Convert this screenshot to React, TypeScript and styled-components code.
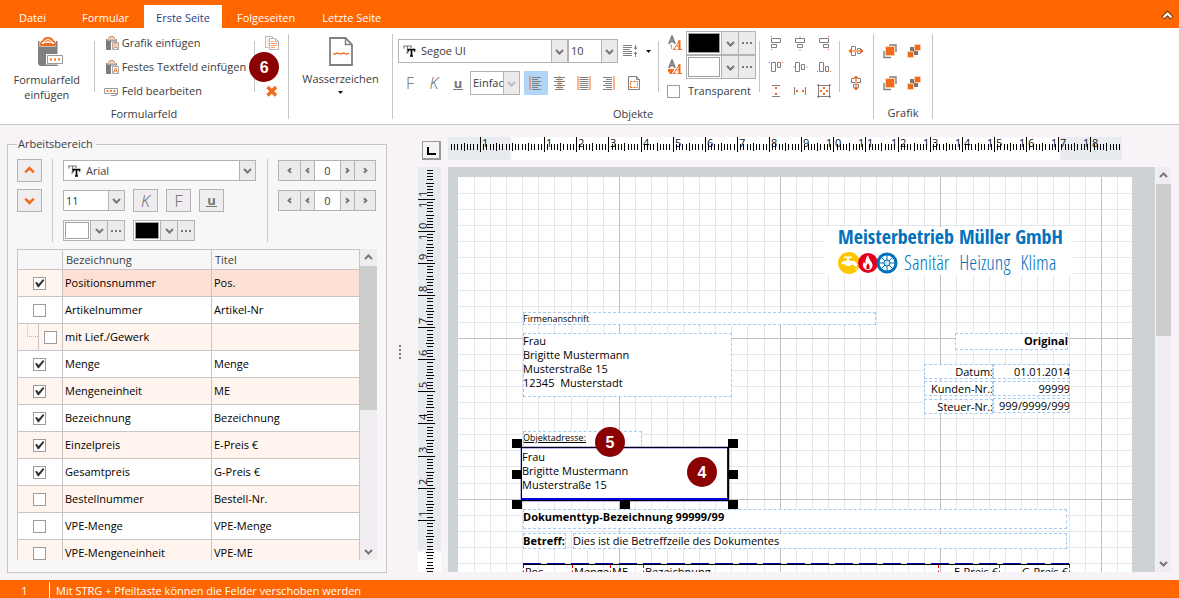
import React from 'react';
import styled, { createGlobalStyle, css } from 'styled-components';

const GRAY = '#808080';
const ORANGE = '#f26a1b';
const PALE = '#fbcfae';
const BRAND = '#ff6600';
const LINE = '#c6c6c6';
const EDGE = '#b4b2b4';

const Global = createGlobalStyle`
  *, *::before, *::after { box-sizing: border-box; }
  body {
    margin: 0;
    font-family: "Open Sans", "Noto Sans", sans-serif;
    font-size: 11px;
    line-height: 16px;
    color: #3c3c3c;
    background: #f7f3f7;
  }
  button, input, select { font: inherit; color: inherit; margin: 0; padding: 0; }
  button { border: 0; background: none; }
  svg { flex: none; }
`;

const Shell = styled.div`
  display: flex;
  flex-direction: column;
  height: 100vh;
  min-height: 400px;
  overflow: hidden;
`;

/* ---------- tab bar ---------- */

const TabBar = styled.nav`
  display: flex;
  align-items: flex-end;
  gap: 3px;
  height: 28px;
  flex: none;
  padding-left: 7px;
  background: ${BRAND};
`;

const Tab = styled.button<{ $active?: boolean; $file?: boolean }>`
  height: 23px;
  padding: 2px 12px 0;
  white-space: nowrap;
  color: ${p => (p.$active ? '#1f3d8a' : '#fff')};
  background: ${p => (p.$active ? '#fff' : 'transparent')};
  ${p => p.$file && css`margin-right: 9px;`}
`;

const Collapse = styled.button`
  display: flex;
  margin: 0 4px 5px auto;
`;

/* ---------- ribbon ---------- */

const Ribbon = styled.div`
  display: flex;
  flex: none;
  height: 97px;
  background: #fff;
  border-bottom: 1px solid ${LINE};
`;

const GroupBox = styled.section<{ $width: number }>`
  display: flex;
  flex-direction: column;
  flex: none;
  width: ${p => p.$width}px;
  padding-top: 3px;
`;

const GroupBody = styled.div`
  display: flex;
  height: 72px;
`;

const GroupName = styled.div`
  line-height: 22px;
  text-align: center;
`;

const Rule = styled.div<{ $top: number; $height: number }>`
  flex: none;
  width: 1px;
  height: ${p => p.$height}px;
  margin-top: ${p => p.$top}px;
  background: ${LINE};
`;

const BigButton = styled.button<{ $width: number }>`
  display: flex;
  flex-direction: column;
  align-items: center;
  width: ${p => p.$width}px;
  padding-top: 6px;
  gap: 5px;
  line-height: 15px;
`;

const CommandList = styled.div`
  display: flex;
  flex-direction: column;
  width: 160px;
  padding-left: 9px;
`;

const Command = styled.button`
  display: flex;
  align-items: center;
  gap: 2px;
  height: 24px;
  white-space: nowrap;
`;

const IconColumn = styled.div`
  position: relative;
  display: grid;
  grid-auto-rows: 24px;
  width: 33px;
`;

const IconGrid = styled.div<{ $cols: number; $row: number; $top?: number }>`
  display: grid;
  grid-template-columns: repeat(${p => p.$cols}, 24px);
  grid-auto-rows: ${p => p.$row}px;
  padding: ${p => p.$top || 0}px 3px 0 4px;
`;

const IconButton = styled.button<{ $active?: boolean }>`
  display: flex;
  align-items: center;
  justify-content: center;
  min-width: 24px;
  height: 24px;
  align-self: center;
  background: ${p => (p.$active ? '#b2d6f7' : 'transparent')};
`;

const TextPanel = styled.div`
  display: flex;
  flex-direction: column;
  gap: 8px;
  width: 265px;
  padding: 8px 0 0 5px;
`;

const Row = styled.div`
  display: flex;
  align-items: center;
`;

const Spacer = styled.div<{ $w: number }>`
  flex: none;
  width: ${p => p.$w}px;
`;

const StyleMark = styled.span<{ $kind: 'F' | 'K' | 'U' }>`
  font-size: 16px;
  font-weight: 300;
  line-height: 20px;
  color: #666;
  ${p => p.$kind === 'K' && css`font-style: italic;`}
  ${p => p.$kind === 'U' && css`
    font-size: 13px;
    line-height: 12px;
    font-weight: 700;
    color: #777;
    border-bottom: 1px solid #777;
    padding: 0 1px;
  `}
`;

const ColorPanel = styled.div`
  display: flex;
  flex-direction: column;
  width: 100px;
  padding-left: 8px;
`;

const ColorRow = styled.div`
  display: flex;
  align-items: center;
  gap: 3px;
  height: 24px;
`;

const CheckLabel = styled.label`
  display: flex;
  align-items: center;
  gap: 8px;
  height: 24px;
`;

/* ---------- controls ---------- */

const ComboBox = styled.div<{ $width: number; $h: number; $arrow: number }>`
  display: grid;
  grid-template-columns: 1fr ${p => p.$arrow}px;
  grid-template-rows: 1fr;
  flex: none;
  width: ${p => p.$width}px;
  height: ${p => p.$h}px;
  border: 1px solid ${EDGE};
  background: #fff;
`;

const ComboSelect = styled.select<{ $indent: number }>`
  grid-area: 1 / 1 / 2 / 3;
  min-width: 0;
  appearance: none;
  border: 0;
  background: transparent;
  padding-left: ${p => p.$indent}px;
  outline: none;
`;

const ComboIcon = styled.span`
  grid-area: 1 / 1;
  align-self: center;
  display: flex;
  padding-left: 4px;
  pointer-events: none;
`;

const ComboArrow = styled.span`
  grid-area: 1 / 2;
  display: flex;
  align-items: center;
  justify-content: center;
  background: #edeaed;
  border-left: 1px solid ${EDGE};
  pointer-events: none;
`;

const Picker = styled.div<{ $width: number; $h: number }>`
  display: grid;
  grid-template-columns: 1fr 17px 17px;
  flex: none;
  width: ${p => p.$width}px;
  height: ${p => p.$h}px;
  border: 1px solid ${EDGE};
  background: #fff;
`;

const Swatch = styled.button<{ $color: string }>`
  margin: 1px;
  border: 1px solid #a0a0a0;
  background: ${p => p.$color};
`;

const PickerPart = styled.button`
  display: flex;
  align-items: center;
  justify-content: center;
  background: #edeaed;
  border-left: 1px solid ${EDGE};
`;

const Check = styled.input.attrs({ type: 'checkbox' })`
  appearance: none;
  display: block;
  flex: none;
  width: 13px;
  height: 13px;
  border: 1px solid #9c9c9c;
  background: #fff;
  &:checked::before {
    content: '';
    display: block;
    width: 11px;
    height: 11px;
    background: #333;
    clip-path: polygon(10% 46%, 26% 40%, 42% 60%, 82% 14%, 94% 24%, 44% 88%, 34% 88%);
  }
`;

/* ---------- work area ---------- */

const Main = styled.main`
  display: flex;
  flex: 1;
  min-height: 0;
  padding: 10px 8px 7px 7px;
`;

const Panel = styled.fieldset`
  display: flex;
  flex-direction: column;
  flex: none;
  gap: 7px;
  width: 380px;
  min-width: 0;
  margin: 0;
  padding: 6px 9px 12px;
  border: 1px solid ${LINE};
  background: #f7f7f7;
`;

const Legend = styled.legend`
  padding: 0 3px 0 1px;
  line-height: 18px;
`;

const PanelTools = styled.div`
  display: flex;
  flex: none;
  height: 83px;
`;

const Stack = styled.div`
  display: flex;
  flex-direction: column;
  gap: 7px;
`;

const ToolRow = styled.div`
  display: flex;
  align-items: center;
  gap: 8px;
  height: 23px;
`;

const Square = styled.button`
  display: flex;
  align-items: center;
  justify-content: center;
  flex: none;
  width: 25px;
  height: 23px;
  border: 1px solid ${EDGE};
  background: #f0edf0;
`;

const Spin = styled.div`
  display: grid;
  grid-template-columns: 22px 14px 25px 14px 21px;
  height: 21px;
  border: 1px solid ${EDGE};
  background: #fff;
`;

const SpinPart = styled.button<{ $side: 'left' | 'right' }>`
  display: flex;
  align-items: center;
  justify-content: center;
  background: #edeaed;
  ${p => css`border-${p.$side === 'left' ? 'right' : 'left'}: 1px solid ${EDGE};`}
`;

const SpinValue = styled.input`
  min-width: 0;
  border: 0;
  text-align: center;
  background: #fff;
  outline: none;
`;

const TableArea = styled.div`
  display: flex;
  flex: 1;
  min-height: 0;
  overflow: hidden;
`;

const Table = styled.table`
  table-layout: fixed;
  align-self: flex-start;
  width: 343px;
  border-collapse: separate;
  border-spacing: 0;
  border: 1px solid ${LINE};
  border-width: 1px 0 0 1px;
  color: #000;
`;

const Th = styled.th<{ $width: number }>`
  width: ${p => p.$width}px;
  height: 20px;
  padding: 0 3px;
  font-weight: 400;
  text-align: left;
  color: #3c3c3c;
  border: 1px solid ${LINE};
  border-width: 0 1px 1px 0;
`;

const Tr = styled.tr<{ $tinted: boolean; $selected: boolean }>`
  background: ${p => (p.$tinted ? '#fff5ee' : '#fff')};
  td + td { background: ${p => (p.$selected ? '#fee1d5' : 'transparent')}; }
`;

const Td = styled.td`
  height: 27px;
  padding: 0 2px;
  border: 1px solid ${LINE};
  border-width: 0 1px 1px 0;
`;

const CheckCell = styled.div<{ $child: boolean }>`
  display: flex;
  align-items: center;
  height: 26px;
  margin-left: -2px;
  padding-left: ${p => (p.$child ? 0 : 15)}px;
`;

const Branch = styled.span`
  display: flex;
  flex: none;
  width: 21px;
  height: 26px;
  margin-right: 5px;
  padding: 0 0 13px 9px;
  border-right: 1px solid ${LINE};
  &::before {
    content: '';
    flex: 1;
    border: 1px dotted #bbb;
    border-width: 0 0 1px 1px;
  }
`;

const Scroll = styled.div<{ $w: number }>`
  display: flex;
  flex-direction: column;
  flex: none;
  width: ${p => p.$w}px;
  background: #f1ecf1;
`;

const ScrollButton = styled.button`
  display: flex;
  align-items: center;
  justify-content: center;
  height: 17px;
`;

const ScrollTrack = styled.div`
  flex: 1;
`;

const Thumb = styled.div<{ $share: number }>`
  height: ${p => p.$share}%;
  background: #cdcdcd;
`;

const Splitter = styled.div`
  display: flex;
  flex-direction: column;
  justify-content: center;
  align-items: center;
  gap: 2px;
  width: 26px;
  margin-right: 5px;
  padding-bottom: 4px;
  i { width: 2px; height: 2px; background: #777; }
`;

/* ---------- designer ---------- */

const Designer = styled.div`
  display: grid;
  flex: 1;
  min-width: 0;
  grid-template-columns: 23px minmax(0, 1fr) 15px;
  grid-template-rows: 23px minmax(0, 1fr);
  gap: 7px 7px;
  padding: 2px 0 1px;
`;

const Corner = styled.button`
  justify-self: end;
  align-self: end;
  display: flex;
  width: 19px;
  height: 19px;
  padding: 5px 4px;
  border: 1px solid #999;
  box-shadow: inset -1px -1px 0 #999;
  background: #f4f4f4;
  &::before {
    content: '';
    width: 9px;
    height: 8px;
    border: 2px solid #000;
    border-width: 0 0 2px 2px;
  }
`;

/* the negative margin leaves room for the digits' line boxes inside the clip */
const RulerBox = styled.div`
  min-width: 0;
  min-height: 0;
  overflow: hidden;
  margin: -5px 0 0 -5px;
  padding: 5px 0 0 5px;
  svg { display: block; overflow: visible; }
`;

const Viewport = styled.div`
  overflow: hidden;
  margin-right: -6px;
  padding: 10px 0 0 10px;
  background: #cdd3d5;
`;

const Page = styled.div`
  position: relative;
  width: 674px;
  height: 953px;
  background: #fff;
  color: #000;
  & > svg { display: block; }
`;

type FieldProps = { $x: number; $y: number; $w: number; $h: number };

const Field = styled.div<FieldProps & { $bold?: boolean; $right?: boolean; $small?: boolean }>`
  position: absolute;
  left: ${p => p.$x}px;
  top: ${p => p.$y}px;
  width: ${p => p.$w}px;
  height: ${p => p.$h}px;
  padding-top: 1px;
  outline: 1px dashed #a6cbf3;
  outline-offset: -1px;
  background: #fff;
  white-space: pre;
  line-height: ${p => (p.$small ? 12 : 14)}px;
  font-size: ${p => (p.$small ? 9 : 11)}px;
  font-weight: ${p => (p.$bold ? 700 : 400)};
  text-align: ${p => (p.$right ? 'right' : 'left')};
`;

const Selected = styled.div<FieldProps>`
  position: absolute;
  left: ${p => p.$x}px;
  top: ${p => p.$y}px;
  width: ${p => p.$w}px;
  height: ${p => p.$h}px;
  border: 1px solid #000;
  outline: 1px solid #b9b9ee;
  box-shadow: inset -1px -2px 0 #0000e0, inset 0 1px 0 #b9b9ee;
  background: #fff;
  white-space: pre;
  line-height: 14px;
  padding-top: 2px;
`;

const Handle = styled.i<{ $x: number; $y: number }>`
  position: absolute;
  left: ${p => p.$x}px;
  top: ${p => p.$y}px;
  width: 10px;
  height: 9px;
  background: #000;
`;

const Badge = styled.span<{ $x: number; $y: number }>`
  position: absolute;
  left: ${p => p.$x}px;
  top: ${p => p.$y}px;
  width: 30px;
  height: 30px;
  border-radius: 50%;
  background: #8b0000;
  color: #fff;
  font: 700 16px/32px "Liberation Sans", Arial, sans-serif;
  text-align: center;
`;

const Brand = styled.div`
  position: absolute;
  left: 366px;
  top: 50px;
  width: 249px;
  height: 48px;
  padding-left: 14px;
  background: #fff;
  color: #0072bc;
  white-space: nowrap;
`;

const BrandName = styled.div`
  font: 700 20px/20px "Open Sans Condensed", "Liberation Sans Narrow", "Open Sans", sans-serif;
`;

const BrandLine = styled.div`
  display: flex;
  align-items: center;
  gap: 10px;
  font: 300 20px/32px "Open Sans Condensed Light", "OpenSans-CondensedLight", "Open Sans Light Condensed", "Liberation Sans Narrow", "Open Sans", sans-serif;
  svg { margin-right: -4px; }
`;

const PositionTable = styled.table`
  position: absolute;
  left: 65px;
  top: 387px;
  width: 547px;
  table-layout: fixed;
  border-spacing: 0;
  border-top: 1px solid #000;
  &::before {
    content: '';
    position: absolute;
    left: 0;
    right: 0;
    top: -2px;
    height: 1px;
    background: repeating-linear-gradient(90deg, #0000c0 0 18px, transparent 18px 24px);
  }
`;

const PositionHead = styled.th<{ $width: number; $right?: boolean }>`
  width: ${p => p.$width}px;
  height: 20px;
  padding: 0 1px;
  vertical-align: top;
  font-weight: 400;
  line-height: 14px;
  text-align: ${p => (p.$right ? 'right' : 'left')};
  border-left: 1px dashed #e00000;
  &:last-child { border-right: 1px dashed #e00000; }
`;

const Status = styled.footer`
  display: flex;
  align-items: center;
  flex: none;
  height: 18px;
  line-height: 18px;
  padding-top: 3px;
  background: ${BRAND};
  color: #fff;
`;

const StatusCell = styled.span`
  width: 50px;
  margin-right: 6px;
  text-align: center;
  border-right: 1px solid #fff;
`;

/* ---------- drawings ---------- */

const Svg = ({ w = 16, h = 16, children }: { w?: number; h?: number; children: React.ReactNode }) => (
  <svg width={w} height={h} viewBox={`0 0 ${w} ${h}`} fill="none" aria-hidden="true">{children}</svg>
);

const CHEVRONS: Record<string, string> = {
  down: 'M1 3 L4.5 6.5 L8 3',
  up: 'M1 6 L4.5 2.5 L8 6',
  left: 'M6 2.2 L3.600 4.5 L6 6.800',
  right: 'M3 2.2 L5.400 4.5 L3 6.800',
};

const Chevron = ({ dir = 'down', color = '#777', s = 9 }: { dir?: string; color?: string; s?: number }) => (
  <svg width={s} height={s} viewBox="0 0 9 9" fill="none" stroke={color} strokeWidth="2" aria-hidden="true">
    <path d={CHEVRONS[dir]} />
  </svg>
);

const Dots = () => (
  <Svg w={12} h={2}><path d="M1 0h2v2H1zM5 0h2v2H5zM9 0h2v2H9z" fill="#777" /></Svg>
);

const Caret = () => <Svg w={5} h={3}><path d="M0 0h5L2.500 3z" fill="#111" /></Svg>;

const ClipboardBig = () => (
  <Svg w={32} h={30}>
    <path d="M7 4h19.500v25H9l-2-2z" fill={GRAY} />
    <path d="M8.500 3h16.500v6.500H8.500z" fill="#fff" />
    <path d="M10 8V6.500q0-2 2-2.500Q13.500 1 17 1t5 3q2 .5 2 2.500V8z" fill="#fff" stroke={ORANGE} strokeWidth="1.800" />
    <path d="M14 4.500q3-1.500 6 0M13 6.500h8" stroke={ORANGE} strokeWidth="1.200" />
    <path d="M15 17h17v11H15z" fill="#fff" />
    <path d="M16.500 18.500h15v8h-15z" stroke="#999" />
    <path d="M19 21.500h2v2h-2zM23 21.500h2v2h-2zM27 21.500h2v2h-2z" fill={ORANGE} />
    <path d="M8 27.500h18.500V29H9z" fill={GRAY} />
  </Svg>
);

const ClipboardSmall = ({ kind }: { kind: 'image' | 'text' }) => (
  <Svg>
    <path d="M2 4h11v3H8v8H3a1 1 0 0 1-1-1z" fill="#7c7c7c" />
    <path d="M3 5.500V4q1 0 2-1.500T7.500 1T10 2.500T12 4v1.500z" fill="#e6e0dc" />
    <path d="M4 3.500q1.500-2 3.500-2t3.500 2" stroke={ORANGE} />
    <path d="M3 5h9" stroke="#a8a09c" />
    <path d="M7 6.500h8v9H7z" fill="#fff" />
    <path d="M8.500 7.500h6v7h-6z" stroke="#a8a8a8" />
    {kind === 'image'
      ? <path d="M10 8.500h3v2.500h-3zM9.500 14v-1.500h4V14" stroke="#e89a70" />
      : <path d="M9.500 13.500L11.500 9L13.500 13.500M10.500 12h2" stroke={ORANGE} />}
  </Svg>
);

const FieldEdit = () => (
  <Svg>
    <path d="M.500 5.500h13v5H.500z" stroke="#9a9a9a" />
    <path d="M2.500 7h2v2h-2zM6 7h2v2H6zM9.500 7h2v2h-2z" fill="#ee8040" />
    <path d="M7 12.500h5M10 12.500l3.500-1v-4" stroke="#9a9a9a" />
  </Svg>
);

const CopyPages = () => (
  <Svg>
    <path d="M1.500 1.500h7v3M1.500 1.500v11h3" stroke="#bbb" />
    <path d="M3 4h2M3 6h2M3 8h2M3 10h2" stroke={PALE} />
    <path d="M5.500 3.500h6l3 3v8h-9z" fill="#fff" stroke="#b4b4b4" />
    <path d="M11.500 3.500v3h3" stroke="#b4b4b4" />
    <path d="M7 8.500h6M7 10.500h6M7 12.500h4M7 6.500h3" stroke="#f59a66" />
  </Svg>
);

const DeleteCross = () => (
  <Svg><path d="M3.500 4L12 12.500M12 4L3.500 12.500" stroke={ORANGE} strokeWidth="3.400" /></Svg>
);

const WatermarkPage = () => (
  <Svg w={24} h={29}>
    <path d="M1 1h15.500l6.500 6.500V28H1z" stroke={GRAY} strokeWidth="1.800" />
    <path d="M16.500 1v6.500H23" stroke={GRAY} strokeWidth="1.500" />
    <path d="M4 16.500q1.500 1 3 0t3 0t3 0t3 0t3 0l1 0" stroke={ORANGE} strokeWidth="1.300" />
  </Svg>
);

const FontMark = () => (
  <Svg w={13} h={12}>
    <path d="M1 3.500V1h7v2M4.500 1v7M3 8h2.500" stroke="#777" strokeWidth="1.200" />
    <path d="M5.500 6.500V4.500h6v2M8.500 4.500v6M7 11h3" stroke="#000" strokeWidth="1.700" />
  </Svg>
);

const LineSpacing = () => (
  <Svg>
    <path d="M1 2.500h9M1 4.500h9M1 6.500h7M1 8.500h9M1 10.500h9M1 12.500h9" stroke={GRAY} />
    <path d="M13.500 2v4M13.500 9v5" stroke={GRAY} />
    <path d="M11.500 4.500h4l-2 2.500zM11.500 11h4l-2-2.500z" fill={GRAY} />
  </Svg>
);

const LINES = {
  left: [9, 6, 9, 7, 9, 6, 9],
  center: [11, 7, 11, 5, 11, 7, 9],
  block: [9, 9, 9, 9, 9, 9, 9],
  right: [9, 6, 9, 7, 9, 6, 9],
};

const TextAlign = ({ kind }: { kind: keyof typeof LINES }) => (
  <Svg>
    {kind === 'center' && <path d="M7.500 1v14" stroke={PALE} strokeWidth="3" />}
    {LINES[kind].map((w, i) => {
      const x = kind === 'right' ? 12 - w : kind === 'center' ? (15 - w) / 2 : kind === 'block' ? 3.5 : 4;
      return <path key={i} d={`M${x} ${2.5 + i * 2}h${w}`} stroke={GRAY} />;
    })}
    {(kind === 'left' || kind === 'block') && <path d="M2 1v14" stroke={ORANGE} />}
    {(kind === 'right' || kind === 'block') && <path d="M14 1v14" stroke={ORANGE} />}
  </Svg>
);

const PageMargins = () => (
  <Svg>
    <path d="M2.500 1.500h8l3 3v10h-11zM10.500 1.500v3h3" stroke={GRAY} />
    <path d="M4.500 12.500v-6h7v6z" stroke={ORANGE} strokeDasharray="2 1" />
  </Svg>
);

const FontColor = ({ fill }: { fill?: boolean }) => (
  <Svg>
    <path d="M2 9L5 1.500L8 9M3 6.500h4" stroke={GRAY} strokeWidth="2" />
    {fill
      ? <path d="M1 10h7v1l-3 4H3L1 12z" fill={ORANGE} />
      : <path d="M4.500 10v4M3 11l1.500-1" stroke="#aaa" />}
    <path d="M6.500 14.500L12.500 5v9.500" stroke="#fff" strokeWidth="3" />
    <path d="M7 14L12.500 5.500M9.500 11h3M6 14.500h3M10.500 14.500h4.500" stroke={ORANGE} />
    <path d="M12.500 5v9.500" stroke={ORANGE} strokeWidth="2" />
  </Svg>
);

const R = (x: number, y: number, w: number, h: number) => `M${x} ${y}h${w}v${h}h${-w}z`;
const D = (x: number, y: number, s = 1) => `M${x} ${y}h${s}v${s}h${-s}z`;

/* outlines, strong accents, soft accents */
const ARRANGE: { name: string; line: string; dot?: string; soft?: string }[] = [
  { name: 'Links ausrichten', line: R(3.5, 3.5, 9, 4) + R(3.5, 9.5, 5, 3), dot: D(3, 1) + D(3, 14) },
  { name: 'Horizontal zentrieren', line: R(3.5, 3.5, 9, 4) + R(5.5, 9.5, 5, 3), soft: D(7, 1, 2) + D(7, 14, 2) },
  { name: 'Rechts ausrichten', line: R(3.5, 3.5, 9, 4) + R(7.5, 9.5, 5, 3), dot: D(12, 1) + D(12, 14) },
  { name: 'Oben ausrichten', line: R(3.5, 3.5, 4, 9) + R(9.5, 3.5, 3, 5), dot: D(1, 3) + D(14, 3) },
  { name: 'Vertikal zentrieren', line: R(3.5, 3.5, 4, 9) + R(9.5, 5.5, 3, 5), soft: D(1, 7, 2) + D(14, 7, 2) },
  { name: 'Unten ausrichten', line: R(3.5, 3.5, 4, 9) + R(9.5, 7.5, 3, 5), dot: D(1, 12) + D(14, 12) },
  { name: 'Gleiche Höhe', line: 'M4 2.500h8M4 13.500h8', dot: D(7, 4, 2) + D(7, 10, 2) },
  { name: 'Gleiche Breite', line: 'M2.500 4v8M13.500 4v8', dot: D(4, 7, 2) + D(10, 7, 2) },
  { name: 'Gleiche Größe', line: R(2.5, 2.5, 11, 11) + 'M2.500 1v2M13.500 1v2M2.500 13v2M13.500 13v2M1 2.500h2M1 13.500h2M13 2.500h2M13 13.500h2', dot: D(7, 4, 2) + D(7, 10, 2) + D(4, 7, 2) + D(10, 7, 2) },
];

const ArrangeIcon = ({ line, dot, soft }: { line: string; dot?: string; soft?: string }) => (
  <Svg>
    <path d={line} stroke={GRAY} />
    {dot && <path d={dot} fill={ORANGE} />}
    {soft && <path d={soft} fill={PALE} />}
  </Svg>
);

const Distribute = ({ vertical }: { vertical?: boolean }) => (
  <Svg>
    <g transform={vertical ? 'matrix(0 1 1 0 0 0)' : undefined}>
      <path d="M3.500 3.500h4v9h-4zM9.500 5.500h3v5h-3z" stroke={GRAY} />
      <path d="M2 8h12" stroke="#f7a878" strokeWidth="2" />
      <path d="M1 8l2-2v4zM15 8l-2-2v4z" fill={ORANGE} stroke={ORANGE} strokeLinejoin="round" />
    </g>
  </Svg>
);

const Layer = () => (
  <Svg>
    <path d="M7 2h7v7" stroke="#808080" strokeWidth="1.400" />
    <path d="M2 8v6.500h7" stroke="#808080" strokeWidth="1.400" />
    <path d="M3.500 3.500h9v9h-9z" fill={ORANGE} stroke={PALE} />
  </Svg>
);

const LayerSplit = () => (
  <Svg>
    <path d="M4 4h4v4H4zM8 8h4v4H8zM6 6h4v4H6z" fill="#777" />
    <path d="M8.500 1.500h6v6h-6zM1.500 8.500h6v6h-6z" fill={ORANGE} stroke={PALE} />
  </Svg>
);

const Trades = () => (
  <Svg w={60} h={22}>
    <circle cx="11" cy="11" r="11" fill="#fdc700" />
    <circle cx="30" cy="11" r="10" fill="#e2001a" />
    <path d="M3 12q1-3 4-3l2-1V6H6V4.500h8V6h-3v2l2 1h3q3.500 1 3.500 5.500h-3q0-2-2-2l-3 1.500H9L7 12.500z" fill="#fff" />
    <path d="M18 15.500l1 2h-2z" fill="#fff" />
    <path d="M30 3q.5 3.500 3 6.500t1 6q-1 2.500-4 2.500t-4.500-2.500q-1.500-3 .5-6q.5 2 1.500 2q-.5-5 2.500-8.500z" fill="#fff" />
    <path d="M30 11q2.500 3 1.500 6h-3q-1-3 1.500-6z" fill="#e2001a" />
    <circle cx="49" cy="11" r="10.500" fill="#0072bc" />
    <circle cx="49" cy="11" r="7.500" fill="#fff" />
    <path d="M49 3v16M41 11h16M43.500 5.500l11 11M54.500 5.500l-11 11" stroke="#0072bc" />
    <circle cx="49" cy="11" r="3" fill="#cfe3f2" stroke="#0072bc" />
  </Svg>
);

const CM = 32.13;

const Ruler = ({ vertical }: { vertical?: boolean }) => {
  const length = vertical ? 900 : 674;
  const zero = vertical ? 385 : 64;
  const marks: React.ReactNode[] = [];
  const from = vertical ? -119 : -19;
  const to = vertical ? 160 : 189;
  for (let i = from; i <= to; i++) {
    const p = Math.round(zero + (i * CM) / 10);
    if (p < 2 || p > length - 2) continue;
    const whole = i % 10 === 0 && i !== 0;
    const start = vertical ? (whole ? 0 : i % 5 === 0 ? 8 : 9) : whole ? 0 : i % 5 === 0 ? 6 : 7;
    const end = whole ? (vertical ? 17 : 15) : i % 5 === 0 ? (vertical ? 16 : 14) : vertical ? 15 : 13;
    marks.push(vertical
      ? <path key={i} d={`M${start} ${p + 0.5}H${end}`} stroke="#000" />
      : <path key={i} d={`M${p + 0.5} ${start}V${end}`} stroke="#000" />);
    if (whole && !(vertical && i > 0)) {
      const n = String(Math.abs(i / 10));
      [...n].forEach((c, k) => marks.push(vertical
        ? <text key={`t${i}${k}`} transform={`translate(9 ${n.length > 1 ? p + 9 - k * 11 : p - 3}) rotate(-90)`}>{c}</text>
        : <text key={`t${i}${k}`} x={n.length > 1 ? p - 7 + k * 9 : p + 2} y="10">{c}</text>));
    }
  }
  return vertical ? (
    <svg width="23" height={length} fontSize="11" fill="#111" shapeRendering="crispEdges" aria-hidden="true">
      <path d="M0 0h23v383H0z" fill="#e7ebef" />
      <path d={`M0 385h23v${length - 385}H0z`} fill="#fff" />
      {marks}
    </svg>
  ) : (
    <svg width={length} height="23" fontSize="11" fill="#111" shapeRendering="crispEdges" aria-hidden="true">
      <path d="M0 0h62v23H0zM613 0h61v23h-61z" fill="#e7ebef" />
      <path d="M64 0h547v23H64z" fill="#fff" />
      {marks}
    </svg>
  );
};

const PageGrid = () => {
  const step = 16.08;
  const minor: string[] = [];
  const major: string[] = [];
  for (let k = 1; k <= 59; k++) {
    const p = Math.round(k * step) + 0.5;
    (k % 10 === 0 ? major : minor).push(`M0 ${p}H674`);
    if (p < 674) (k % 10 === 0 ? major : minor).push(`M${p} 0V953`);
  }
  return (
    <svg width="674" height="953" fill="none" aria-hidden="true">
      <path d={minor.join('')} stroke="#e4e7ed" />
      <path d={major.join('')} stroke="#c0c0c4" />
    </svg>
  );
};

/* ---------- pieces ---------- */

type ComboProps = { label: string; value: string; width: number; h: number; arrow?: number; icon?: boolean; indent?: number; muted?: boolean };

const Combo = ({ label, value, width, h, arrow = 16, icon, indent = 2, muted }: ComboProps) => (
  <ComboBox $width={width} $h={h} $arrow={arrow}>
    <ComboSelect aria-label={label} defaultValue={value} $indent={icon ? 22 : indent}>
      <option>{value}</option>
    </ComboSelect>
    {icon && <ComboIcon><FontMark /></ComboIcon>}
    <ComboArrow><Chevron color={muted ? '#bdbdbd' : '#777'} /></ComboArrow>
  </ComboBox>
);

const ColorPicker = ({ label, color, width, h }: { label: string; color: string; width: number; h: number }) => (
  <Picker $width={width} $h={h}>
    <Swatch $color={color} aria-label={label} />
    <PickerPart aria-label={`${label} auswählen`}><Chevron /></PickerPart>
    <PickerPart aria-label={`${label} bearbeiten`}><Dots /></PickerPart>
  </Picker>
);

const Spinner = ({ label }: { label: string }) => (
  <Spin>
    <SpinPart $side="left" aria-label={`${label} stark verringern`}><Chevron dir="left" /></SpinPart>
    <SpinPart $side="left" aria-label={`${label} verringern`}><Chevron dir="left" /></SpinPart>
    <SpinValue aria-label={label} defaultValue="0" />
    <SpinPart $side="right" aria-label={`${label} erhöhen`}><Chevron dir="right" /></SpinPart>
    <SpinPart $side="right" aria-label={`${label} stark erhöhen`}><Chevron dir="right" /></SpinPart>
  </Spin>
);

const COLUMNS: { name: string; title: string; on?: boolean; child?: boolean }[] = [
  { name: 'Positionsnummer', title: 'Pos.', on: true },
  { name: 'Artikelnummer', title: 'Artikel-Nr' },
  { name: 'mit Lief./Gewerk', title: '', child: true },
  { name: 'Menge', title: 'Menge', on: true },
  { name: 'Mengeneinheit', title: 'ME', on: true },
  { name: 'Bezeichnung', title: 'Bezeichnung', on: true },
  { name: 'Einzelpreis', title: 'E-Preis €', on: true },
  { name: 'Gesamtpreis', title: 'G-Preis €', on: true },
  { name: 'Bestellnummer', title: 'Bestell-Nr.' },
  { name: 'VPE-Menge', title: 'VPE-Menge' },
  { name: 'VPE-Mengeneinheit', title: 'VPE-ME' },
];

export default function App() {
  return (
    <Shell>
      <Global />
      <TabBar>
        <Tab $file>Datei</Tab>
        <Tab>Formular</Tab>
        <Tab $active>Erste Seite</Tab>
        <Tab>Folgeseiten</Tab>
        <Tab>Letzte Seite</Tab>
        <Collapse aria-label="Menüband minimieren">
          <Svg w={15} h={15}>
            <path d="M3 10l4.500-4.500L12 10" stroke="#7a3a10" strokeWidth="4.500" />
            <path d="M3.500 9.500l4-4l4 4" stroke="#fff" strokeWidth="2.200" />
          </Svg>
        </Collapse>
      </TabBar>

      <Ribbon>
        <GroupBox $width={288}>
          <GroupBody>
            <BigButton $width={94}>
              <ClipboardBig />
              <span>Formularfeld<br />einfügen</span>
            </BigButton>
            <Rule $top={10} $height={51} />
            <CommandList>
              <Command><ClipboardSmall kind="image" />Grafik einfügen</Command>
              <Command><ClipboardSmall kind="text" />Festes Textfeld einfügen</Command>
              <Command><FieldEdit />Feld bearbeiten</Command>
            </CommandList>
            <Rule $top={10} $height={51} />
            <IconColumn>
              <IconButton aria-label="Kopieren"><CopyPages /></IconButton>
              <span />
              <IconButton aria-label="Löschen"><DeleteCross /></IconButton>
              <Badge $x={-6} $y={21}>6</Badge>
            </IconColumn>
          </GroupBody>
          <GroupName>Formularfeld</GroupName>
        </GroupBox>
        <Rule $top={6} $height={85} />

        <GroupBox $width={103}>
          <GroupBody>
            <BigButton $width={103}>
              <WatermarkPage />
              <span>Wasserzeichen</span>
              <Caret />
            </BigButton>
          </GroupBody>
        </GroupBox>
        <Rule $top={6} $height={85} />

        <GroupBox $width={480}>
          <GroupBody>
            <TextPanel>
              <Row>
                <Combo label="Schriftart" value="Segoe UI" width={170} h={24} icon />
                <Combo label="Schriftgröße" value="10" width={50} h={24} />
                <IconButton aria-label="Zeilenabstand"><LineSpacing /></IconButton>
                <Spacer $w={4} />
                <Caret />
              </Row>
              <Row>
                <IconButton aria-label="Fett"><StyleMark $kind="F">F</StyleMark></IconButton>
                <IconButton aria-label="Kursiv"><StyleMark $kind="K">K</StyleMark></IconButton>
                <IconButton aria-label="Unterstrichen"><StyleMark $kind="U">u</StyleMark></IconButton>
                <Combo label="Unterstreichung" value="Einfach" width={50} h={24} muted />
                <Spacer $w={4} />
                <IconButton $active aria-label="Linksbündig"><TextAlign kind="left" /></IconButton>
                <IconButton aria-label="Zentriert"><TextAlign kind="center" /></IconButton>
                <IconButton aria-label="Blocksatz"><TextAlign kind="block" /></IconButton>
                <IconButton aria-label="Rechtsbündig"><TextAlign kind="right" /></IconButton>
                <Spacer $w={2} />
                <IconButton aria-label="Seitenränder"><PageMargins /></IconButton>
              </Row>
            </TextPanel>
            <Rule $top={10} $height={51} />
            <ColorPanel>
              <ColorRow><FontColor /><ColorPicker label="Schriftfarbe" color="#000" width={70} h={24} /></ColorRow>
              <ColorRow><FontColor fill /><ColorPicker label="Hintergrundfarbe" color="#fff" width={70} h={24} /></ColorRow>
              <CheckLabel><Check />Transparent</CheckLabel>
            </ColorPanel>
            <Rule $top={10} $height={51} />
            <IconGrid $cols={3} $row={24}>
              {ARRANGE.map(a => (
                <IconButton key={a.name} aria-label={a.name}><ArrangeIcon line={a.line} dot={a.dot} soft={a.soft} /></IconButton>
              ))}
            </IconGrid>
            <Rule $top={10} $height={51} />
            <IconGrid $cols={1} $row={32} $top={4}>
              <IconButton aria-label="Horizontal verteilen"><Distribute /></IconButton>
              <IconButton aria-label="Vertikal verteilen"><Distribute vertical /></IconButton>
            </IconGrid>
          </GroupBody>
          <GroupName>Objekte</GroupName>
        </GroupBox>
        <Rule $top={6} $height={85} />

        <GroupBox $width={58}>
          <GroupBody>
            <IconGrid $cols={2} $row={32} $top={4}>
              <IconButton aria-label="In den Vordergrund"><Layer /></IconButton>
              <IconButton aria-label="Eine Ebene nach vorne"><LayerSplit /></IconButton>
              <IconButton aria-label="In den Hintergrund"><Layer /></IconButton>
              <IconButton aria-label="Eine Ebene nach hinten"><LayerSplit /></IconButton>
            </IconGrid>
          </GroupBody>
          <GroupName>Grafik</GroupName>
        </GroupBox>
        <Rule $top={6} $height={85} />
      </Ribbon>

      <Main>
        <Panel>
          <Legend>Arbeitsbereich</Legend>
          <PanelTools>
            <Stack>
              <Square aria-label="Nach oben"><Chevron dir="up" color={ORANGE} s={11} /></Square>
              <Square aria-label="Nach unten"><Chevron color={ORANGE} s={11} /></Square>
            </Stack>
            <Spacer $w={10} />
            <Rule $top={0} $height={83} />
            <Spacer $w={10} />
            <Stack>
              <ToolRow><Combo label="Schriftart der Tabelle" value="Arial" width={193} h={21} icon /></ToolRow>
              <ToolRow>
                <Combo label="Schriftgröße der Tabelle" value="11" width={62} h={21} />
                <Square aria-label="Kursiv"><StyleMark $kind="K">K</StyleMark></Square>
                <Square aria-label="Fett"><StyleMark $kind="F">F</StyleMark></Square>
                <Square aria-label="Unterstrichen"><StyleMark $kind="U">u</StyleMark></Square>
              </ToolRow>
              <ToolRow>
                <ColorPicker label="Füllfarbe" color="#fff" width={62} h={21} />
                <ColorPicker label="Textfarbe" color="#000" width={62} h={21} />
              </ToolRow>
            </Stack>
            <Spacer $w={11} />
            <Rule $top={0} $height={83} />
            <Spacer $w={10} />
            <Stack>
              <ToolRow><Spinner label="Abstand oben" /></ToolRow>
              <ToolRow><Spinner label="Abstand unten" /></ToolRow>
            </Stack>
          </PanelTools>
          <TableArea>
            <Table>
              <thead>
                <tr>
                  <Th $width={45} aria-label="Aktiv" />
                  <Th $width={149}>Bezeichnung</Th>
                  <Th $width={148}>Titel</Th>
                </tr>
              </thead>
              <tbody>
                {COLUMNS.map((c, i) => (
                  <Tr key={c.name} $tinted={i % 2 === 0} $selected={i === 0}>
                    <Td>
                      <CheckCell $child={!!c.child}>
                        {c.child && <Branch />}
                        <Check defaultChecked={c.on} aria-label={c.name} />
                      </CheckCell>
                    </Td>
                    <Td>{c.name}</Td>
                    <Td>{c.title}</Td>
                  </Tr>
                ))}
              </tbody>
            </Table>
            <Scroll $w={17}>
              <ScrollButton aria-label="Liste nach oben"><Chevron dir="up" /></ScrollButton>
              <ScrollTrack><Thumb $share={52} /></ScrollTrack>
              <ScrollButton aria-label="Liste nach unten"><Chevron /></ScrollButton>
            </Scroll>
          </TableArea>
        </Panel>

        <Splitter><i /><i /><i /><i /></Splitter>

        <Designer>
          <Corner aria-label="Tabulator" />
          <RulerBox><Ruler /></RulerBox>
          <span />
          <RulerBox><Ruler vertical /></RulerBox>
          <Viewport>
            <Page>
              <PageGrid />
              <Brand>
                <BrandName>Meisterbetrieb Müller GmbH</BrandName>
                <BrandLine><Trades /><span>Sanitär</span><span>Heizung</span><span>Klima</span></BrandLine>
              </Brand>
              <Field $x={65} $y={135} $w={353} $h={13} $small>Firmenanschrift</Field>
              <Field $x={65} $y={156} $w={209} $h={64}>{'Frau\nBrigitte Mustermann\nMusterstraße 15\n12345  Musterstadt'}</Field>
              <Field $x={497} $y={156} $w={113} $h={17} $bold $right>Original</Field>
              <Field $x={466} $y={187} $w={69} $h={15} $right>Datum:</Field>
              <Field $x={535} $y={187} $w={77} $h={15} $right>01.01.2014</Field>
              <Field $x={466} $y={204} $w={69} $h={15} $right>Kunden-Nr.:</Field>
              <Field $x={535} $y={204} $w={77} $h={15} $right>99999</Field>
              <Field $x={466} $y={222} $w={69} $h={15} $right>Steuer-Nr.:</Field>
              <Field $x={535} $y={221} $w={77} $h={15} $right>999/9999/999</Field>
              <Field $x={65} $y={254} $w={119} $h={16} $small><u>Objektadresse:</u></Field>
              <Selected $x={63} $y={270} $w={208} $h={54}>{'Frau\nBrigitte Mustermann\nMusterstraße 15'}</Selected>
              <Handle $x={54} $y={262} /><Handle $x={270} $y={262} />
              <Handle $x={54} $y={293} /><Handle $x={270} $y={293} />
              <Handle $x={54} $y={323} /><Handle $x={162} $y={323} /><Handle $x={270} $y={323} />
              <Field $x={65} $y={332} $w={544} $h={20} $bold>Dokumenttyp-Bezeichnung 99999/99</Field>
              <Field $x={65} $y={356} $w={43} $h={16} $bold>Betreff:</Field>
              <Field $x={115} $y={356} $w={494} $h={16}>Dies ist die Betreffzeile des Dokumentes</Field>
              <PositionTable>
                <thead>
                  <tr>
                    <PositionHead $width={49}>Pos.</PositionHead>
                    <PositionHead $width={38}>Menge</PositionHead>
                    <PositionHead $width={33}>ME</PositionHead>
                    <PositionHead $width={295}>Bezeichnung</PositionHead>
                    <PositionHead $width={61} $right>E-Preis €</PositionHead>
                    <PositionHead $width={71} $right>G-Preis €</PositionHead>
                  </tr>
                </thead>
              </PositionTable>
              <Badge $x={137} $y={250}>5</Badge>
              <Badge $x={229} $y={280}>4</Badge>
            </Page>
          </Viewport>
          <Scroll $w={15}>
            <ScrollButton aria-label="Seite nach oben"><Chevron dir="up" /></ScrollButton>
            <ScrollTrack><Thumb $share={41} /></ScrollTrack>
            <ScrollButton aria-label="Seite nach unten"><Chevron /></ScrollButton>
          </Scroll>
        </Designer>
      </Main>

      <Status><StatusCell>1</StatusCell>Mit STRG + Pfeiltaste können die Felder verschoben werden</Status>
    </Shell>
  );
}
